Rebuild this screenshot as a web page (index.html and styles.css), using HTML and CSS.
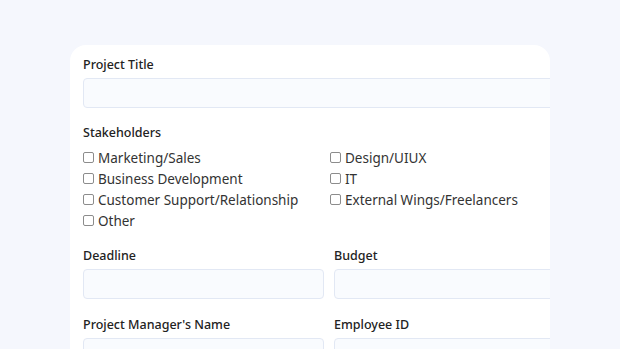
FILE: index.html
```html
<!DOCTYPE html>
<html lang="en">
<head>
<meta charset="utf-8">
<title>Project Form</title>
<link rel="stylesheet" href="styles.css">
</head>
<body>
<div class="page">
  <form class="card">
    <div class="inner">
      <div class="group group-tight">
        <label class="label">Project Title</label>
        <input class="field" type="text">
      </div>
      <div class="group group-tight">
        <div class="label">Stakeholders</div>
        <div class="checks">
          <label class="check"><input type="checkbox" class="box">Marketing/Sales</label>
          <label class="check"><input type="checkbox" class="box">Design/UIUX</label>
          <label class="check"><input type="checkbox" class="box">Business Development</label>
          <label class="check"><input type="checkbox" class="box">IT</label>
          <label class="check"><input type="checkbox" class="box">Customer Support/Relationship</label>
          <label class="check"><input type="checkbox" class="box">External Wings/Freelancers</label>
          <label class="check"><input type="checkbox" class="box">Other</label>
        </div>
      </div>
      <div class="row">
        <div class="group">
          <label class="label">Deadline</label>
          <input class="field" type="text">
        </div>
        <div class="group">
          <label class="label">Budget</label>
          <input class="field" type="text">
        </div>
      </div>
      <div class="row">
        <div class="group">
          <label class="label">Project Manager's Name</label>
          <input class="field" type="text">
        </div>
        <div class="group">
          <label class="label">Employee ID</label>
          <input class="field" type="text">
        </div>
      </div>
    </div>
  </form>
</div>
</body>
</html>
```
FILE: styles.css
```css
html, body {
  margin: 0;
  padding: 0;
  background: #f5f7fd;
}
body {
  font-family: "Noto Sans", "Open Sans", sans-serif;
  color: #2a2a2a;
}
.page {
  padding: 45px 0 0 70px;
  height: 304px;
  overflow: hidden;
}
.card {
  width: 480px;
  height: 400px;
  background: #ffffff;
  border-radius: 16px 16px 0 0;
  overflow: hidden;
  margin: 0;
}
.inner {
  width: 492px;
  padding: 12px 0 0 13px;
}
.group {
  display: flex;
  flex-direction: column;
  margin-bottom: 18px;
}
.group-tight {
  margin-bottom: 17px;
}
.label {
  font-size: 12.5px;
  font-weight: 500;
  line-height: 16px;
  height: 16px;
  margin-bottom: 5px;
  color: #222222;
}
.field {
  box-sizing: border-box;
  height: 30px;
  width: 100%;
  margin: 0;
  border: 1px solid #e2e8f4;
  background: #f9fbfe;
  border-radius: 4px;
  outline: none;
}
.checks {
  display: grid;
  grid-template-columns: 247px auto;
  margin-top: 1px;
}
.check {
  display: flex;
  align-items: center;
  height: 21px;
  font-size: 13.5px;
  color: #333333;
}
.box {
  appearance: none;
  -webkit-appearance: none;
  box-sizing: border-box;
  width: 11px;
  height: 11px;
  margin: 0 4px 0 0;
  border: 1px solid #8c8c8c;
  border-radius: 2px;
  background: #fff;
}
.row {
  display: grid;
  grid-template-columns: 241px 241px;
  column-gap: 10px;
}
```
